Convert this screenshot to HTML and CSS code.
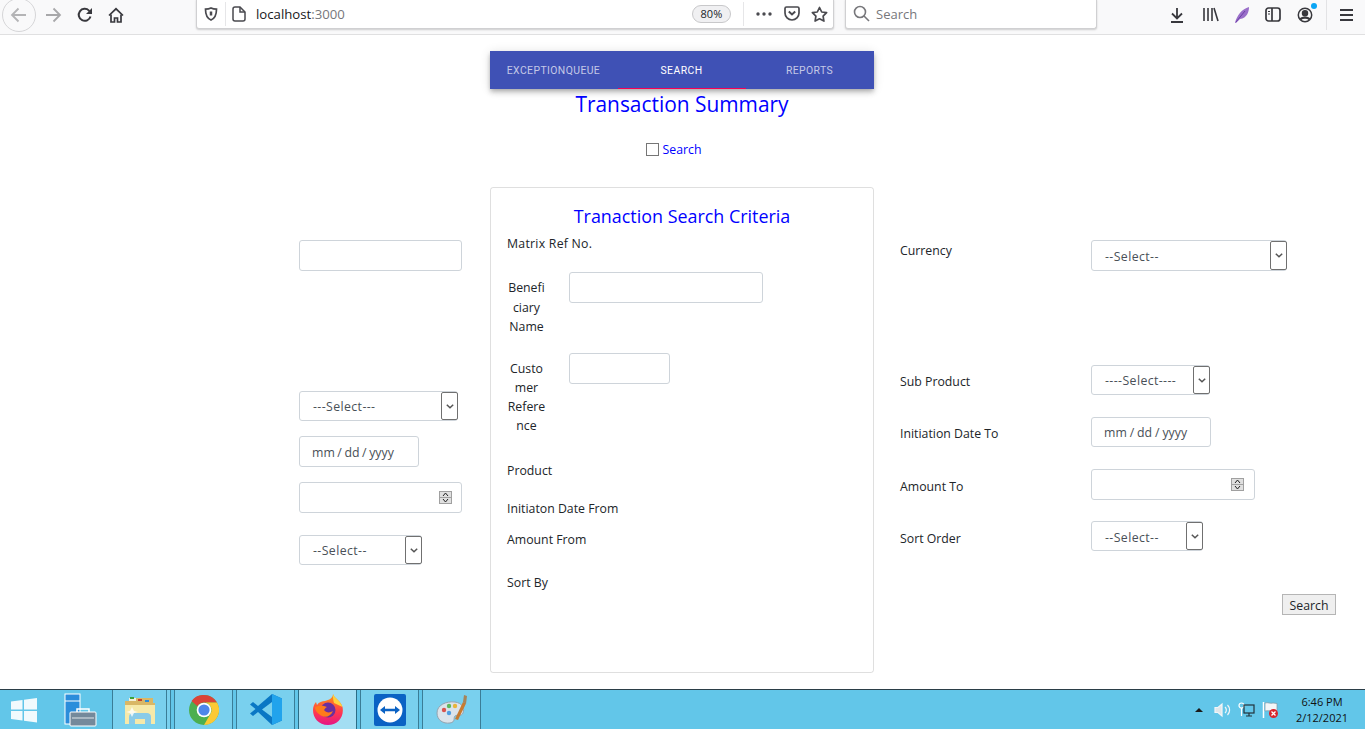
FILE: index.html
```html
<!DOCTYPE html>
<html lang="en">
<head>
    <meta charset="UTF-8">
    <meta name="viewport" content="width=device-width, initial-scale=1.0">
    <title>Transaction Summary</title>
    <link rel="stylesheet" href="styles.css">
</head>
<body>
    <!-- browser toolbar -->
    <header class="toolbar">
        <div class="back-btn">
            <svg width="18" height="18" viewBox="0 0 18 18" fill="none" stroke="#b4b4b6" stroke-width="1.8"><path d="M16 9H2M8.5 2.5 2 9l6.5 6.5"/></svg>
        </div>
        <div class="tool tool-forward">
            <svg width="18" height="18" viewBox="0 0 18 18" fill="none" stroke="#a8a8aa" stroke-width="1.8"><path d="M2 9h14M9.5 2.5 16 9l-6.5 6.5"/></svg>
        </div>
        <div class="tool">
            <svg width="16" height="16" viewBox="0 0 16 16" fill="none" stroke="#38383d" stroke-width="2"><path d="M13.5 9.5A6 6 0 1 1 12 3.6L14.5 6"/><path d="M15 1v6H9" fill="#38383d" stroke="none"/></svg>
        </div>
        <div class="tool tool-home">
            <svg width="16" height="16" viewBox="0 0 16 16" fill="none" stroke="#38383d" stroke-width="1.7"><path d="M1 8.5 8 1.8l7 6.7"/><path d="M3 7.5V15h3.500v-4h3v4H13V7.500"/></svg>
        </div>

        <div class="url-bar">
            <svg class="shield" width="14" height="14" viewBox="0 0 14 14" fill="none" stroke="#4a4a4f" stroke-width="1.700"><path d="M7 1c2 1 3.500 1.200 5.500 1.200 0 5-1 8.800-5.500 10.800C2.500 11 1.500 7.200 1.500 2.200 3.500 2.200 5 2 7 1Z"/><path d="M7 4.500v4" stroke-width="2.500"/></svg>
            <span class="url-sep"></span>
            <svg class="page-icon" width="14" height="16" viewBox="0 0 14 16" fill="none" stroke="#4a4a4f" stroke-width="1.500"><path d="M3 1h5l5 5v7a2 2 0 0 1-2 2H3a2 2 0 0 1-2-2V3a2 2 0 0 1 2-2Z"/><path d="M8 1v5h5"/></svg>
            <span class="url-text">localhost<span class="url-port">:3000</span></span>
            <span class="zoom-pill">80%</span>
            <span class="url-sep url-sep-right"></span>
            <svg class="dots" width="16" height="4" viewBox="0 0 16 4" fill="#4a4a4f"><circle cx="2" cy="2" r="1.700"/><circle cx="8" cy="2" r="1.700"/><circle cx="14" cy="2" r="1.700"/></svg>
            <svg class="pocket" width="16" height="15" viewBox="0 0 16 15" fill="none" stroke="#4a4a4f" stroke-width="1.700"><path d="M2.500 1h11A1.500 1.500 0 0 1 15 2.500V7A7 7 0 0 1 1 7V2.500A1.500 1.500 0 0 1 2.500 1Z"/><path d="m4.800 5.500 3.200 3 3.200-3" stroke-width="2"/></svg>
            <svg class="star" width="17" height="16" viewBox="0 0 17 16" fill="none" stroke="#4a4a4f" stroke-width="1.700" stroke-linejoin="round"><path d="m8.500 1.500 2.200 4.500 4.900.7-3.500 3.500.8 4.900-4.400-2.300-4.400 2.300.8-4.900-3.500-3.500 4.900-.7Z"/></svg>
        </div>

        <div class="search-bar">
            <svg width="17" height="17" viewBox="0 0 17 17" fill="none" stroke="#77777b" stroke-width="1.600"><circle cx="7" cy="7" r="5.500"/><path d="m11 11 5 5"/></svg>
            <span>Search</span>
        </div>

        <div class="tool-group">
            <svg class="tg-download" width="16" height="16" viewBox="0 0 16 16" fill="none" stroke="#38383d" stroke-width="1.800"><path d="M8 1v10M3 6.500 8 11.500l5-5M2 15h12"/></svg>
            <svg class="tg-library" width="17" height="15" viewBox="0 0 17 15" fill="none" stroke="#38383d" stroke-width="1.600"><path d="M2 1v13M6 1v13M10 1v13M12 1l4 13"/></svg>
            <svg class="tg-feather" width="16" height="18" viewBox="0 0 16 18"><path d="M1 17C3 9 8 3 15 1c0 5-2 11-9 12l-4 4Z" fill="#9a6fc9"/><path d="M2 16 11 5" stroke="#6b3fa5" stroke-width="1"/></svg>
            <svg class="tg-sidebar" width="16" height="15" viewBox="0 0 16 15" fill="none" stroke="#38383d" stroke-width="1.700"><rect x="1" y="1" width="14" height="13" rx="2.500"/><path d="M7 1v13"/><path d="M3 4.500h2M3 7h2" stroke-width="1.200"/></svg>
            <div class="tg-account">
                <svg width="16" height="16" viewBox="0 0 16 16" fill="none" stroke="#38383d" stroke-width="1.500"><circle cx="8" cy="8" r="6.700"/><circle cx="8" cy="6.300" r="2.500" fill="#38383d"/><path d="M3.500 12.500C4.500 10 11.500 10 12.500 12.500" stroke-width="2.400"/></svg>
                <span class="account-dot"></span>
            </div>
            <span class="tg-sep"></span>
            <svg class="tg-menu" width="14" height="12" viewBox="0 0 14 12" fill="#38383d"><rect y="0" width="13" height="2"/><rect y="5" width="13" height="2"/><rect y="10" width="13" height="2"/></svg>
        </div>
    </header>

    <main class="page">
        <nav class="tabs">
            <a class="tab">ExceptionQueue</a>
            <a class="tab tab-active">Search</a>
            <a class="tab">Reports</a>
        </nav>

        <h1 class="page-title">Transaction Summary</h1>

        <label class="search-toggle">
            <span class="check-box"></span>
            <span>Search</span>
        </label>

        <form class="form-row">
            <div class="col-left">
                <input class="input w-163" type="text">
                <div class="select w-159 mt-120"><span>---Select---</span><span class="select-arrow"><svg width="8" height="5" viewBox="0 0 8 5" fill="none" stroke="#555" stroke-width="1.500"><path d="m.8.800 3.200 3 3.200-3"/></svg></span></div>
                <div class="input date w-120 mt-15">mm / dd / yyyy</div>
                <div class="input number w-163 mt-15"><span class="spinner"><svg width="13" height="13" viewBox="0 0 13 13"><rect x=".5" y=".5" width="12" height="12" fill="#e0e0e0" stroke="#a0a0a0"/><path d="M.5 6.500h12" stroke="#a0a0a0"/><path d="m4 5 2.500-3L9 5M4 8l2.500 3L9 8" fill="none" stroke="#222"/></svg></span></div>
                <div class="select w-123 mt-22"><span>--Select--</span><span class="select-arrow"><svg width="8" height="5" viewBox="0 0 8 5" fill="none" stroke="#555" stroke-width="1.500"><path d="m.8.800 3.200 3 3.200-3"/></svg></span></div>
            </div>

            <section class="card">
                <h2 class="card-title">Tranaction Search Criteria</h2>
                <div class="card-label label-matrix m6">Matrix Ref No.</div>
                <div class="card-row card-row-benef">
                    <div class="narrow-label nl-benef">Benefi<br>ciary<br>Name</div>
                    <input class="input w-194" type="text">
                </div>
                <div class="card-row card-row-cust">
                    <div class="narrow-label nl-cust">Custo<br>mer<br>Refere<br>nce</div>
                    <input class="input w-101" type="text">
                </div>
                <div class="card-label m24">Product</div>
                <div class="card-label m18">Initiaton Date From</div>
                <div class="card-label m11">Amount From</div>
                <div class="card-label m23">Sort By</div>
            </section>

            <div class="col-right">
                <div class="right-row right-row-top">
                    <div class="right-label">Currency</div>
                    <div class="select select-low w-196"><span>--Select--</span><span class="select-arrow"><svg width="8" height="5" viewBox="0 0 8 5" fill="none" stroke="#555" stroke-width="1.500"><path d="m.8.800 3.200 3 3.200-3"/></svg></span></div>
                </div>
                <div class="right-row mt-94">
                    <div class="right-label">Sub Product</div>
                    <div class="select w-119"><span>----Select----</span><span class="select-arrow"><svg width="8" height="5" viewBox="0 0 8 5" fill="none" stroke="#555" stroke-width="1.500"><path d="m.8.800 3.200 3 3.200-3"/></svg></span></div>
                </div>
                <div class="right-row mt-22">
                    <div class="right-label">Initiation Date To</div>
                    <div class="input date date-wide w-120">mm / dd / yyyy</div>
                </div>
                <div class="right-row mt-22">
                    <div class="right-label">Amount To</div>
                    <div class="input number w-164"><span class="spinner"><svg width="13" height="13" viewBox="0 0 13 13"><rect x=".5" y=".5" width="12" height="12" fill="#e0e0e0" stroke="#a0a0a0"/><path d="M.5 6.500h12" stroke="#a0a0a0"/><path d="m4 5 2.500-3L9 5M4 8l2.500 3L9 8" fill="none" stroke="#222"/></svg></span></div>
                </div>
                <div class="right-row mt-21">
                    <div class="right-label right-label-low">Sort Order</div>
                    <div class="select select-low w-112"><span>--Select--</span><span class="select-arrow"><svg width="8" height="5" viewBox="0 0 8 5" fill="none" stroke="#555" stroke-width="1.500"><path d="m.8.800 3.200 3 3.200-3"/></svg></span></div>
                </div>
                <button class="search-btn" type="button">Search</button>
            </div>
        </form>
    </main>

    <!-- windows taskbar -->
    <footer class="taskbar">
        <div class="start">
            <svg width="28" height="26" viewBox="0 0 28 26" fill="#f1fafd"><path d="M1 4.500 12.500 3v9.500H1ZM14 2.800 27 1v11.500H14ZM1 14h11.500v9.500L1 22ZM14 14h13v11.500L14 23.700Z"/></svg>
        </div>
        <div class="pinned pinned-server">
            <svg width="34" height="34" viewBox="0 0 34 34"><rect x="2" y="1" width="15" height="30" fill="#2b8ddb" stroke="#fff"/><path d="M2 8h15" stroke="#fff"/><rect x="7" y="19" width="26" height="14" rx="1" fill="#74899b" stroke="#fff"/><path d="M14 19v-3h12v3" fill="none" stroke="#fff" stroke-width="1.500"/><path d="M9 25h22" stroke="#dfe6ea"/></svg>
        </div>
        <div class="cell cell-folder">
            <svg width="32" height="30" viewBox="0 0 32 30"><path d="M1 6h10V3h18v5h2v21H1Z" fill="#d9b766"/><path d="M5 3h7v3H5Z" fill="#f4efd8"/><rect x="6" y="2" width="4" height="2" fill="#3ba33b"/><rect x="14" y="4" width="4" height="2" fill="#c8402c"/><rect x="21" y="5" width="4" height="2" fill="#2b8ddb"/><path d="M1 10h30v19H1Z" fill="#f6e9a9"/><path d="M5 29V22c0-3 2-4 4-4h14c2 0 4 1 4 4v7h-6v-5h-10v5Z" fill="#8acbe8"/><path d="M8 12l2 4 4 1-4 1-2 4-2-4-4-1 4-1Z" fill="#fff" opacity=".8"/></svg>
        </div>
        <div class="cell-strip"></div>
        <div class="cell">
            <svg width="30" height="30" viewBox="0 0 30 30"><circle cx="15" cy="15" r="15" fill="#4caf50"/><path d="M15 0a15 15 0 0 1 13 7.500H15a7.500 7.500 0 0 0-6.500 3.750L2.500 6A15 15 0 0 1 15 0Z" fill="#db4437"/><path d="M28 7.500A15 15 0 0 1 15 30l6.500-11.250A7.500 7.500 0 0 0 15 7.500Z" fill="#fcc934"/><circle cx="15" cy="15" r="7.300" fill="#fff"/><circle cx="15" cy="15" r="5.600" fill="#4d86ea"/></svg>
        </div>
        <div class="cell">
            <svg width="32" height="33" viewBox="0 0 32 33"><path d="M22 1 32 5.500v22L22 32 8 19l-5 4-3-2.500L5.500 16 0 11.500 3 9l5 4Z" fill="#0a77c4"/><path d="M22 1 32 5.500v22L22 32Z" fill="#21a3ec"/><path d="M22 9v15l-10-7.500Z" fill="#79d0ee"/></svg>
        </div>
        <div class="cell cell-active">
            <svg width="32" height="32" viewBox="0 0 32 32"><defs><linearGradient id="foxBody" x1="0" y1="0" x2="0" y2="1"><stop offset="0" stop-color="#ff980e"/><stop offset=".6" stop-color="#ff3750"/><stop offset="1" stop-color="#e31587"/></linearGradient></defs><path d="M21 0c1 4 8 7 9.500 13 2 10-5 18-14.500 18S1 24 1 16c0-3 1-6 3-8l1 3c2-3 5-4 8-4 4-1 8-3 8-7Z" fill="url(#foxBody)"/><path d="M21 0c1 4 8 7 9.500 13L22 9c-1-3-1-6-1-9Z" fill="#ffd33d"/><circle cx="16" cy="16" r="7.500" fill="#6b2f9e"/><path d="M3 13c4-2 8-2 12 0 -2 1-2 2-3 3 2 3 6 3 9 1-2 5-7 7-11 5-4-2-7-5-7-9Z" fill="#ff7a1a"/></svg>
        </div>
        <div class="cell">
            <svg width="32" height="32" viewBox="0 0 32 32"><rect width="32" height="32" rx="2" fill="#0a62c4"/><circle cx="16" cy="16" r="12.500" fill="#fff"/><path d="M6 16 11 12v2.800h10V12l5 4-5 4v-2.800H11V20Z" fill="#0a62c4"/></svg>
        </div>
        <div class="cell">
            <svg width="32" height="32" viewBox="0 0 32 32"><path d="M1 19C1 11 10 7 19 8c7 1 10 6 8 11-2 4-5 1-8 3-2 2 1 6-5 7C7 30 1 26 1 19Z" fill="#dbe3ea" stroke="#93a3af"/><circle cx="8" cy="16" r="2.200" fill="#d9534f"/><circle cx="13" cy="12" r="2.200" fill="#5cb85c"/><circle cx="19" cy="12" r="2.200" fill="#e8b53b"/><circle cx="13" cy="19" r="2.200" fill="#4d9de0"/><path d="M19 25 27 8l3 1.500L22 26Z" fill="#c77b30"/><path d="M27 8l1-7 3 1-1 8Z" fill="#a6845a"/></svg>
        </div>

        <div class="tray">
            <span class="tray-up"></span>
            <svg class="tray-sound" width="18" height="16" viewBox="0 0 18 16" fill="none" stroke="#f2f6f8" stroke-width="1.200"><path d="M1 5.500h3L8 2v12l-4-3.500H1Z" fill="#dfe7eb"/><path d="M11 5a4 4 0 0 1 0 6M13.500 3a7 7 0 0 1 0 10"/></svg>
            <svg class="tray-net" width="17" height="16" viewBox="0 0 17 16" fill="none" stroke="#fff" stroke-width="1.200"><circle cx="3.500" cy="3.500" r="2.500"/><path d="M3.500 6v8"/><rect x="6" y="3" width="10" height="8" stroke="#22333b"/><path d="M8 14h6M11 11v3" stroke="#22333b"/></svg>
            <svg class="tray-flag" width="17" height="18" viewBox="0 0 17 18"><path d="M1.500 1v16" stroke="#fff" stroke-width="1.500"/><path d="M3 2c3-1 5 1 8 0l4 .5V10c-4 1-8-1-12 0Z" fill="#f3f6f8" stroke="#7f97a3" stroke-width=".7"/><circle cx="11.500" cy="12.500" r="4.500" fill="#d8242c"/><path d="m9.500 10.500 4 4m0-4-4 4" stroke="#fff" stroke-width="1.300"/></svg>
            <div class="clock">
                <div>6:46 PM</div>
                <div>2/12/2021</div>
            </div>
        </div>
    </footer>
</body>
</html>
```

FILE: styles.css
```css
* {
    box-sizing: border-box;
}

html, body {
    margin: 0;
    padding: 0;
}

body {
    width: 1365px;
    height: 729px;
    overflow: hidden;
    display: flex;
    flex-direction: column;
    background-color: #fff;
    font-family: "Open Sans", "Noto Sans", sans-serif;
    font-size: 12.3px;
    color: #212529;
}

/* browser toolbar */
.toolbar {
    height: 35px;
    flex: none;
    display: flex;
    align-items: center;
    background-color: #f9f9fa;
    border-bottom: 1px solid #e0e0e1;
    padding-left: 2px;
    padding-bottom: 5px;
}

.back-btn {
    width: 34px;
    height: 34px;
    flex: none;
    border-radius: 50%;
    border: 1px solid #d6d6d8;
    display: flex;
    align-items: center;
    justify-content: center;
}

.tool {
    width: 32px;
    flex: none;
    display: flex;
    justify-content: center;
}

.tool-forward {
    margin-left: 1px;
}

.tool-home {
    width: 30px;
}

.url-bar {
    width: 638px;
    height: 30px;
    margin-left: 65px;
    margin-top: -1px;
    flex: none;
    display: flex;
    align-items: center;
    background-color: #fff;
    border: 1px solid #d0d0d2;
    border-top: none;
    border-radius: 0 0 3px 3px;
    box-shadow: 0 1px 2px rgba(0, 0, 0, 0.18);
}

.shield {
    margin-left: 7px;
}

.url-sep {
    width: 1px;
    height: 24px;
    background-color: #e6e6e8;
    margin-left: 7px;
}

.page-icon {
    margin-left: 6px;
}

.url-text {
    margin-left: 10px;
    font-size: 13.2px;
    color: #18181a;
}

.url-port {
    color: #77777b;
}

.zoom-pill {
    margin-left: 347px;
    width: 39px;
    height: 18px;
    line-height: 16px;
    text-align: center;
    border: 1px solid #c8c8ca;
    border-radius: 9px;
    background-color: #f0f0f2;
    font-size: 11px;
}

.url-sep-right {
    margin-left: 12px;
}

.dots {
    margin-left: 12px;
}

.pocket {
    margin-left: 12px;
}

.star {
    margin-left: 11px;
}

.search-bar {
    width: 252px;
    height: 30px;
    margin-left: 11px;
    margin-top: -1px;
    flex: none;
    display: flex;
    align-items: center;
    gap: 6px;
    padding-left: 7px;
    background-color: #fff;
    border: 1px solid #d0d0d2;
    border-top: none;
    border-radius: 0 0 3px 3px;
    box-shadow: 0 1px 2px rgba(0, 0, 0, 0.18);
    font-size: 13px;
    color: #77777b;
}

.tool-group {
    display: flex;
    align-items: center;
    margin-left: 72px;
}

.tg-library {
    margin-left: 17px;
}

.tg-feather {
    margin-left: 15px;
}

.tg-sidebar {
    margin-left: 15px;
}

.tg-account {
    position: relative;
    margin-left: 16px;
    height: 16px;
}

.account-dot {
    position: absolute;
    top: -4px;
    right: -4px;
    width: 6px;
    height: 6px;
    border-radius: 50%;
    background-color: #0aa5f5;
}

.tg-sep {
    width: 1px;
    height: 30px;
    margin-left: 13px;
    background-color: #e3e3e5;
}

.tg-menu {
    margin-left: 13px;
}

/* page */
.page {
    flex: 1;
    padding-top: 16px;
}

.tabs {
    width: 384px;
    height: 38px;
    margin-left: 490px;
    display: flex;
    background-color: #3f51b5;
    box-shadow: 0 2px 4px -1px rgba(0, 0, 0, 0.2), 0 4px 5px rgba(0, 0, 0, 0.14), 0 1px 10px rgba(0, 0, 0, 0.12);
}

.tab {
    width: 128px;
    height: 38px;
    line-height: 40px;
    padding-right: 1px;
    text-align: center;
    font-family: Roboto, sans-serif;
    font-size: 10.4px;
    font-weight: 400;
    letter-spacing: 0.42px;
    text-transform: uppercase;
    color: rgba(255, 255, 255, 0.7);
}

.tab-active {
    color: #fff;
    border-bottom: 1px solid #f50057;
}

.page-title {
    margin: 0;
    height: 30px;
    line-height: 30px;
    padding-right: 1px;
    text-align: center;
    font-size: 20.9px;
    font-weight: 400;
    color: #00f;
}

.search-toggle {
    height: 20px;
    margin-top: 20px;
    padding-right: 18px;
    display: flex;
    align-items: center;
    justify-content: center;
    gap: 4px;
    color: #00f;
}

.check-box {
    width: 13px;
    height: 13px;
    border: 1px solid #767676;
    background-color: #fff;
}

.form-row {
    margin-top: 28px;
    padding-left: 299px;
    display: flex;
}

.col-left {
    width: 191px;
    padding-top: 53px;
}

.card {
    width: 384px;
    height: 486px;
    padding: 16px 16px 0;
    border: 1px solid rgba(0, 0, 0, 0.125);
    border-radius: 3px;
}

.card-title {
    margin: 0;
    height: 24px;
    line-height: 24px;
    text-align: center;
    font-size: 17.9px;
    font-weight: 400;
    color: #00f;
}

.card-label {
    height: 20px;
    line-height: 20px;
}

.label-matrix {
    letter-spacing: 0.25px;
}

.card-row {
    display: flex;
    align-items: flex-start;
}

.card-row-benef {
    height: 64px;
    margin-top: 18px;
}

.card-row-cust {
    height: 84px;
    margin-top: 17px;
}

.narrow-label {
    width: 39px;
    text-align: center;
    margin-right: 23px;
}

.nl-benef {
    margin-top: 6px;
    line-height: 19.5px;
}

.nl-cust {
    margin-top: 6px;
    line-height: 19.1px;
}

.col-right {
    width: 436px;
    margin-left: 26px;
    padding-top: 53px;
}

.col-right .number {
    padding-right: 10px;
}

.right-row {
    display: flex;
    align-items: center;
}

.right-row-top {
    align-items: flex-start;
}

.right-label {
    width: 191px;
    line-height: 20px;
    padding-top: 4px;
}

.right-row-top .right-label {
    padding-top: 1px;
}

.right-row .right-label-low {
    padding-top: 6px;
}

/* form controls */
.input {
    display: block;
    height: 31px;
    padding: 0 12px;
    border: 1px solid #ced4da;
    border-radius: 3px;
    background-color: #fff;
    color: #495057;
    font-family: inherit;
    font-size: 12.3px;
}

.date {
    line-height: 31px;
    word-spacing: -0.6px;
}

.date-wide {
    height: 30px;
    line-height: 30px;
    word-spacing: -0.3px;
}

.number {
    display: flex;
    align-items: center;
    justify-content: flex-end;
    padding-right: 9px;
}

.spinner {
    display: flex;
}

.select {
    height: 30px;
    display: flex;
    align-items: center;
    justify-content: space-between;
    padding: 0 0 0 13px;
    border: 1px solid #ced4da;
    border-radius: 3px;
    background-color: #fff;
    color: #495057;
    letter-spacing: 0.4px;
}

.select-low > span:first-child {
    padding-top: 2px;
}

.select-arrow {
    width: 17px;
    height: 28px;
    margin-right: -1px;
    display: flex;
    align-items: center;
    justify-content: center;
    border: 1px solid #707070;
    border-radius: 2px;
    background-color: #fff;
}

.right-row-top .select {
    height: 31px;
}

.right-row-top .select-arrow {
    height: 29px;
}

.search-btn {
    display: block;
    width: 54px;
    height: 21px;
    margin-top: 43px;
    margin-left: 382px;
    padding: 1px 0 0;
    border: 1px solid #b5b5b5;
    background-color: #efefef;
    color: #212529;
    font-family: inherit;
    font-size: 12.3px;
}

/* widths and spacing used by the form */
.w-101 { width: 101px; }
.w-112 { width: 112px; }
.w-119 { width: 119px; }
.w-120 { width: 120px; }
.w-123 { width: 123px; }
.w-159 { width: 159px; }
.w-163 { width: 163px; }
.w-164 { width: 164px; }
.w-194 { width: 194px; }
.w-196 { width: 196px; }

.mt-15 { margin-top: 15px; }
.mt-21 { margin-top: 21px; }
.mt-22 { margin-top: 22px; }
.mt-94 { margin-top: 94px; }
.mt-120 { margin-top: 120px; }

.m6 { margin-top: 6px; }
.m11 { margin-top: 11px; }
.m18 { margin-top: 18px; }
.m23 { margin-top: 23px; }
.m24 { margin-top: 24px; }

/* windows taskbar */
.taskbar {
    height: 40px;
    flex: none;
    display: flex;
    align-items: stretch;
    background-color: #62c6e9;
    border-top: 1px solid #2b3e48;
}

.start {
    width: 48px;
    display: flex;
    align-items: center;
    justify-content: center;
    padding-right: 1px;
}

.pinned {
    width: 64px;
    display: flex;
    align-items: center;
    justify-content: center;
}

.cell {
    width: 59px;
    margin-right: 3px;
    display: flex;
    align-items: center;
    justify-content: center;
    background-color: #79d0ee;
    border-left: 1px solid #3a7d97;
    border-right: 1px solid #3a7d97;
}

.cell-folder {
    width: 55px;
    margin-right: 0;
}

.cell-strip {
    width: 4px;
    margin-right: 3px;
    background-color: #79d0ee;
    border-right: 1px solid #3a7d97;
}

.cell-active {
    background-color: #a3def3;
    border-color: #2b6d86;
}

.tray {
    margin-left: auto;
    display: flex;
    align-items: center;
    padding-right: 13px;
}

.tray-up {
    width: 0;
    height: 0;
    border-left: 4px solid transparent;
    border-right: 4px solid transparent;
    border-bottom: 4px solid #1a1a1a;
}

.tray-sound {
    margin-left: 11px;
}

.tray-net {
    margin-left: 6px;
}

.tray-flag {
    margin-left: 7px;
}

.clock {
    margin-left: 13px;
    width: 60px;
    text-align: center;
    font-size: 11px;
    line-height: 16px;
    color: #111;
}
```
